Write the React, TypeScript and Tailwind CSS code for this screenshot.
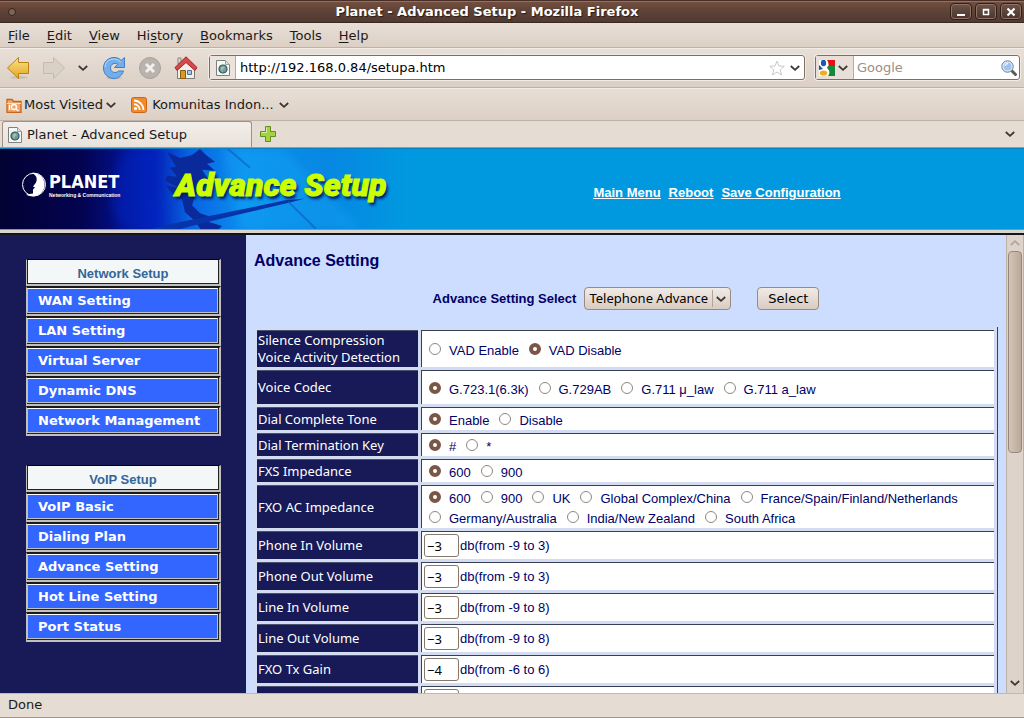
import type { ReactNode } from "react";

const menus = [
  { key: "F", rest: "ile" },
  { key: "E", rest: "dit" },
  { key: "V", rest: "iew" },
  { pre: "Hi", key: "s", rest: "tory" },
  { key: "B", rest: "ookmarks" },
  { key: "T", rest: "ools" },
  { key: "H", rest: "elp" },
];

const sidebar = [
  {
    title: "Network Setup",
    items: ["WAN Setting", "LAN Setting", "Virtual Server", "Dynamic DNS", "Network Management"],
  },
  {
    title: "VoIP Setup",
    items: ["VoIP Basic", "Dialing Plan", "Advance Setting", "Hot Line Setting", "Port Status"],
  },
];

const radioRows = [
  {
    name: "vad",
    label: "Silence Compression\nVoice Activity Detection",
    options: ["VAD Enable", "VAD Disable"],
    selected: 1,
    height: "h-[37px]",
  },
  {
    name: "codec",
    label: "Voice Codec",
    options: ["G.723.1(6.3k)", "G.729AB", "G.711 μ_law", "G.711 a_law"],
    selected: 0,
    height: "h-[34px]",
  },
  { name: "tone", label: "Dial Complete Tone", options: ["Enable", "Disable"], selected: 0, height: "h-[23px]" },
  { name: "key", label: "Dial Termination Key", options: ["#", "*"], selected: 0, height: "h-[23px]" },
  { name: "fxs", label: "FXS Impedance", options: ["600", "900"], selected: 0, height: "h-[23px]" },
  {
    name: "fxo",
    label: "FXO AC Impedance",
    options: [
      "600",
      "900",
      "UK",
      "Global Complex/China",
      "France/Spain/Finland/Netherlands",
      "Germany/Australia",
      "India/New Zealand",
      "South Africa",
    ],
    selected: 0,
    height: "h-[43px]",
  },
];

const volumeRows = [
  { id: "phone-in", label: "Phone In Volume", value: "−3", range: "db(from -9 to 3)" },
  { id: "phone-out", label: "Phone Out Volume", value: "−3", range: "db(from -9 to 3)" },
  { id: "line-in", label: "Line In Volume", value: "−3", range: "db(from -9 to 8)" },
  { id: "line-out", label: "Line Out Volume", value: "−3", range: "db(from -9 to 8)" },
  { id: "fxo-tx", label: "FXO Tx Gain", value: "−4", range: "db(from -6 to 6)" },
  { id: "next", label: "", value: "", range: "" },
];

function Chevron({ className = "text-[#3c3732]", up = false }: { className?: string; up?: boolean }) {
  return (
    <svg viewBox="0 0 10 6" className={`h-[6px] w-[10px] shrink-0 ${className}`} fill="none" stroke="currentColor" strokeWidth="1.8">
      <path d={up ? "M.8 5 5 1.2 9.2 5" : "M.8 1 5 4.8 9.2 1"} />
    </svg>
  );
}

function PageIcon() {
  return (
    <svg viewBox="0 0 16 16" className="size-4 shrink-0">
      <path d="M1.5.5h9l4 4v11h-13z" fill="#f7f8f6" stroke="#7d817b" />
      <path d="M10.5.5v4h4" fill="#dfe2dc" stroke="#9da19a" />
      <circle cx="8" cy="9" r="4" fill="#6f9d97" stroke="#34536f" strokeWidth="1.2" />
      <path d="M6 7.5c1-1.5 3-1.5 3.500 0S7 9 7.500 11 5 10 6 7.500z" fill="#a3c391" />
    </svg>
  );
}

function BackIcon() {
  return (
    <svg viewBox="0 0 24 24" className="size-6">
      <defs>
        <linearGradient id="gold" x1="0" y1="0" x2="0" y2="1">
          <stop offset="0" stopColor="#fbe28a" />
          <stop offset="1" stopColor="#e5a51e" />
        </linearGradient>
      </defs>
      <ellipse cx="13" cy="21.500" rx="9" ry="1.500" fill="#cbbfb2" />
      <path d="M1.500 12 12.500 1.500v5h10v11h-10v5z" fill="url(#gold)" stroke="#b98314" strokeLinejoin="round" />
    </svg>
  );
}

function ForwardIcon() {
  return (
    <svg viewBox="0 0 24 24" className="size-6">
      <path d="M22.500 12 11.500 1.500v5h-10v11h10v5z" fill="#d9d0c6" stroke="#c5bbb0" strokeLinejoin="round" />
    </svg>
  );
}

function ReloadIcon() {
  return (
    <svg viewBox="0 0 24 24" className="size-6">
      <ellipse cx="12" cy="22" rx="8" ry="1.500" fill="#cbbfb2" />
      <path
        d="M22.500 1.500v10h-10l3.300-3.300C12.500 6.300 8.500 8 8.500 12c0 4.500 5 6 8 3h5c-1.500 4.500-5 7.500-9.500 7.500C6 22.500 1.500 18 1.500 12S6 1.500 12 1.500c3 0 5.300 1 7.200 2.900z"
        fill="#74aeea"
        stroke="#3f7fc6"
        strokeLinejoin="round"
      />
      <path d="M3 11C3.500 3 13.500.5 18.800 6" fill="none" stroke="#b8d8f7" />
    </svg>
  );
}

function StopIcon() {
  return (
    <svg viewBox="0 0 24 24" className="size-6">
      <circle cx="12" cy="12" r="10.500" fill="#b9b3ae" stroke="#a8a29c" />
      <path d="m8 8 8 8M16 8l-8 8" stroke="#f2efec" strokeWidth="3" />
    </svg>
  );
}

function HomeIcon() {
  return (
    <svg viewBox="0 0 24 24" className="size-6">
      <path d="M3.500 12 12 4l8.500 8v10.500h-17z" fill="#f1efea" stroke="#7c7a75" />
      <path d="M4 2h3v6H4z" fill="#d9d5cf" stroke="#8b8782" />
      <path d="M12 .8 23 11.500 21 14.500 12 6.500l-9 8L1 11.500z" fill="#d8474c" stroke="#a32328" strokeLinejoin="round" />
      <path d="M6.500 14.500h5v8h-5z" fill="#d99a24" stroke="#8a5c10" />
      <path d="M13.500 14.500h4v4h-4z" fill="#a9c6e6" stroke="#54718f" />
    </svg>
  );
}

function FolderIcon() {
  return (
    <svg viewBox="0 0 16 16" className="size-4 shrink-0">
      <path d="M1 2.500h5l1.500 2H15v11H1z" fill="#f2a768" stroke="#c8641c" strokeWidth="1.300" />
      <path d="M1 6.500h14" stroke="#fbe0c8" />
      <circle cx="8" cy="10" r="2.500" fill="none" stroke="#fff" strokeWidth="1.300" />
      <path d="m10 12 2.500 2M3.500 8v5" stroke="#fff" strokeWidth="1.300" />
    </svg>
  );
}

function FeedIcon() {
  return (
    <svg viewBox="0 0 16 16" className="size-4 shrink-0">
      <rect x=".5" y=".5" width="15" height="15" rx="2" fill="#f08a2c" stroke="#cf6511" />
      <circle cx="4.500" cy="11.500" r="1.600" fill="#fff" />
      <path d="M3 7.200A6 6 0 0 1 8.800 13M3 3.500A9.500 9.500 0 0 1 12.500 13" fill="none" stroke="#fff" strokeWidth="1.800" />
    </svg>
  );
}

function GoogleIcon() {
  return (
    <svg viewBox="0 0 16 16" className="size-4 shrink-0">
      <path d="M0 0h16v16H0z" fill="#fff" />
      <path d="M8 0h8v6H9.500C10 4 9 1.500 8 0z" fill="#e80f14" />
      <path d="M9 6h7v10H9c2-3 2-5-1-8z" fill="#128a37" />
      <path d="M0 5c2 2 3 3 4 4L0 10z" fill="#1d4fa3" />
      <ellipse cx="4.500" cy="3" rx="2.600" ry="3.300" fill="#1a58b5" />
      <ellipse cx="4.500" cy="13" rx="3.800" ry="2.600" fill="#eab020" />
    </svg>
  );
}

function PlusIcon() {
  return (
    <svg viewBox="0 0 16 16" className="size-4">
      <path d="M5.500.5h5v5h5v5h-5v5h-5v-5h-5v-5h5z" fill="#a5d243" stroke="#5f8f1d" strokeLinejoin="round" />
      <path d="M6.500 6.500v-5M1.500 6.500h5" stroke="#d8f09a" />
    </svg>
  );
}

function WindowButton({ label, children }: { label: string; children: ReactNode }) {
  return (
    <button
      aria-label={label}
      className="flex h-[17px] w-[22px] items-center justify-center rounded-sm border border-[#2e1f19] bg-gradient-to-b from-[#6e5247] to-[#4a362d] shadow-[inset_0_0_0_1px_#8d7468]"
    >
      <svg viewBox="0 0 10 10" className="size-[10px]" fill="none" stroke="#fff">
        {children}
      </svg>
    </button>
  );
}

function TitleBar() {
  return (
    <header className="flex h-[23px] shrink-0 items-center border-y border-t-[#4b2f27] border-b-[#39281f] bg-gradient-to-b from-[#75503f] via-[#5d4236] to-[#513a30] pr-[2px] shadow-[inset_0_1px_0_#94705f]">
      <div className="flex w-6 justify-center">
        <span className="size-2 rounded-full border border-[#33231c] bg-[#7e6559]" />
      </div>
      <h1 className="flex-1 text-center text-[13px] leading-5 font-bold text-white [text-shadow:1px_1px_1px_#2a1b15]">
        Planet - Advanced Setup - Mozilla Firefox
      </h1>
      <div className="flex gap-[3px]">
        <WindowButton label="Minimize">
          <path d="M1 8h8" strokeWidth="2" />
        </WindowButton>
        <WindowButton label="Maximize">
          <path d="M2.500 2.500h5v5h-5zM2 3h6" strokeWidth="1.500" />
        </WindowButton>
        <WindowButton label="Close">
          <path d="m1.500 1.500 7 7M8.500 1.500l-7 7" strokeWidth="2.200" />
        </WindowButton>
      </div>
    </header>
  );
}

function Toolbar() {
  return (
    <div className="flex h-10 shrink-0 items-center border-b border-[#bfb1a5] bg-gradient-to-b from-[#e8dfd7] to-[#dcd0c5] pr-1 pl-[6px] shadow-[inset_0_1px_0_#f3ede8]">
      <button aria-label="Back"><BackIcon /></button>
      <button aria-label="Forward" className="ml-3"><ForwardIcon /></button>
      <button aria-label="Recent pages" className="ml-3"><Chevron /></button>
      <button aria-label="Reload" className="ml-[14px]"><ReloadIcon /></button>
      <button aria-label="Stop" className="ml-3"><StopIcon /></button>
      <button aria-label="Home" className="ml-3"><HomeIcon /></button>

      <div className="ml-[11px] flex h-[25px] flex-1 items-center rounded-[3px] border border-[#7f6f63] bg-white pr-1 shadow-[0_0_0_1px_#f2ebe5]">
        <div className="flex h-full w-[26px] items-center justify-center border-r border-[#b9aa9e] bg-[#ebe3dc]">
          <PageIcon />
        </div>
        <input aria-label="Address" defaultValue="http://192.168.0.84/setupa.htm" className="min-w-0 flex-1 pl-1 text-[13px] text-black outline-none" />
        <svg viewBox="0 0 16 16" className="size-4" fill="#fff" stroke="#c9c9c9">
          <path d="m8 1 2 5 5.200.3-4 3.400L12.600 15 8 12l-4.600 3 1.400-5.300-4-3.400L6 6z" strokeLinejoin="round" />
        </svg>
        <button aria-label="History" className="ml-[5px]"><Chevron /></button>
      </div>

      <div className="ml-[10px] flex h-[25px] w-[205px] items-center rounded-[3px] border border-[#7f6f63] bg-white pr-[2px] shadow-[0_0_0_1px_#f2ebe5]">
        <button aria-label="Search engine" className="flex h-full w-[38px] items-center gap-[3px] border-r border-[#b9aa9e] bg-[#e8dfd8] pl-[3px]">
          <GoogleIcon />
          <Chevron />
        </button>
        <input aria-label="Search" placeholder="Google" className="min-w-0 flex-1 pl-[3px] text-[13px] outline-none placeholder:text-[#9b8f84]" />
        <button aria-label="Go">
          <svg viewBox="0 0 16 16" className="size-4">
            <path d="m10 10 4.500 4.500" stroke="#5b5b58" strokeWidth="3" strokeLinecap="round" />
            <circle cx="6.500" cy="6.500" r="5" fill="#9fc3ec" stroke="#e9eef5" strokeWidth="2" />
            <circle cx="6.500" cy="6.500" r="5.700" fill="none" stroke="#5f7f9f" />
            <path d="M4 6a3 3 0 0 1 3-2.500" fill="none" stroke="#e6f1fc" strokeWidth="1.300" />
          </svg>
        </button>
      </div>
    </div>
  );
}

function Banner() {
  return (
    <div className="flex h-[81px] shrink-0 border-t border-[#0b7fc0] bg-[#0099e0]">
      <div className="relative w-[410px] shrink-0">
        <svg viewBox="0 0 410 81" preserveAspectRatio="none" className="size-full">
          <defs>
            <linearGradient id="sky" x1="0" y1="0" x2="1" y2="0">
              <stop offset="0" stopColor="#020233" />
              <stop offset=".2" stopColor="#030350" />
              <stop offset=".3" stopColor="#04118a" />
              <stop offset=".38" stopColor="#0423b8" />
              <stop offset=".46" stopColor="#0862e2" />
              <stop offset=".6" stopColor="#0b90ee" />
              <stop offset=".8" stopColor="#0787e2" />
              <stop offset="1" stopColor="#0099e0" />
            </linearGradient>
            <filter id="soft">
              <feGaussianBlur stdDeviation="5" />
            </filter>
          </defs>
          <path d="M0 0h410v81H0z" fill="url(#sky)" />
          <path d="M124 0h34c-8 30-4 50 8 81h-46C106 50 112 30 124 0z" fill="#0528c8" opacity=".5" filter="url(#soft)" />
          <path d="M222 0h60l80 81H240z" fill="#16a8f6" opacity=".35" filter="url(#soft)" />
          <path
            d="M167 3l13 6 12-3 8-6 6 6 9 7-8 2 8 7-13-1 6 9-8 2 2 9-7 6-3 10 8 8 12 4-3 5 13 4-4 4 9 5-2 4h-27l-3-5 6-4-6-9-10-9-3-13-10-6-6-8 12 2-13-7 2-5 10 1-7-9 6-1z"
            fill="#0a2a9c"
          />
          <path d="M150 81c50-12 95-20 135-29l20-2c-45 12-85 20-125 31z" fill="#0734a8" />
          <path d="M228 0 250 19M288 53l28 28" fill="none" stroke="#0b5cc0" strokeWidth="2" opacity=".6" />
          <circle cx="34" cy="36" r="11.500" fill="none" stroke="#fff" />
          <path d="M32 24c6 4 5 7 4 10l-3 4 2 1-2 2v4l-7 1a12 12 0 1 0 6-22z" fill="#fff" />
        </svg>
        <div className="absolute top-[23px] left-[49px] text-white">
          <div className="font-['DejaVu_Sans_Condensed','DejaVu_Sans',sans-serif] text-[18px] leading-5 font-bold">PLANET</div>
          <div className="font-['Liberation_Sans',sans-serif] text-[5px] leading-[6px] font-bold whitespace-nowrap">Networking &amp; Communication</div>
        </div>
        <div className="absolute top-4 left-[175px] font-['Roboto',sans-serif] text-[32px] leading-10 font-black whitespace-nowrap text-[#ccff00] italic [-webkit-text-stroke:1px_#ccff00] [text-shadow:2px_3px_3px_#021a66]">
          Advance Setup
        </div>
      </div>
      <nav className="flex flex-1 items-center justify-center gap-2 pt-2 font-['Liberation_Sans',sans-serif] text-[13px] font-bold text-white underline">
        <a href="#main">Main Menu</a>
        <a href="#reboot">Reboot</a>
        <a href="#save">Save Configuration</a>
      </nav>
    </div>
  );
}

function Sidebar() {
  return (
    <aside className="flex w-[246px] shrink-0 flex-col gap-[29px] bg-[#171a57] pt-6 pl-[26px]">
      {sidebar.map((group) => (
        <nav key={group.title} className="w-[195px]">
          <div className="border-t border-r-2 border-b-2 border-l border-t-black border-r-[#c0c0c0] border-b-[#c0c0c0] border-l-[#c0c0c0]">
            <h2 className="h-6 border-r border-b border-l border-[#222] bg-[#f4f7f7] pt-[2px] text-center font-['Liberation_Sans',sans-serif] text-[13px] leading-6 font-bold text-[#336699]">
              {group.title}
            </h2>
          </div>
          {group.items.map((item) => (
            <div key={item} className="border-t-2 border-r-2 border-b-2 border-l border-t-[#1a1a1a] border-r-[#c0c0c0] border-b-[#c0c0c0] border-l-[#c0c0c0]">
              <div className="border-r border-b border-[#222]">
                <a
                  href="#"
                  className="block h-[25px] border border-t-white border-r-[#c0c0c0] border-b-[#c0c0c0] border-l-[#c0c0c0] bg-[#3366ff] pl-[10px] text-[13px] leading-6 font-bold whitespace-nowrap text-white"
                >
                  {item}
                </a>
              </div>
            </div>
          ))}
        </nav>
      ))}
    </aside>
  );
}

const thClass =
  "w-[161px] border-t border-[#4a5270] bg-[#171a57] p-0 pl-px text-left align-middle font-['Noto_Sans',sans-serif] text-[13px] leading-[17px] font-normal whitespace-pre text-white";
const tdClass = "border-t border-l border-[#3a3f58] bg-white p-0 align-middle";

function SettingsTable() {
  return (
    <table className="mt-[17px] w-full border-separate border-spacing-[3px] border-r border-[#3a3f58] bg-[#d3dcf0]">
      <tbody>
        {radioRows.map((row) => (
          <tr key={row.name} className={row.height}>
            <th scope="row" className={thClass}>{row.label}</th>
            <td className={tdClass}>
              <div role="radiogroup" aria-label={row.label} className="flex flex-wrap gap-x-[10px] pl-[7px]">
                {row.options.map((option, i) => (
                  <label key={option} className="flex h-5 items-center gap-2">
                    <input
                      type="radio"
                      name={row.name}
                      defaultChecked={i === row.selected}
                      className="size-3 appearance-none rounded-full border border-[#8f877e] bg-white checked:border-4 checked:border-[#7a5646]"
                    />
                    <span className="pt-1 leading-4">{option}</span>
                  </label>
                ))}
              </div>
            </td>
          </tr>
        ))}
        {volumeRows.map((row) => (
          <tr key={row.id} className="h-7">
            <th scope="row" className={thClass}>
              <label htmlFor={row.id}>{row.label}</label>
            </th>
            <td className={tdClass}>
              <div className="flex items-center gap-px pl-[2px]">
                <input
                  id={row.id}
                  defaultValue={row.value}
                  className="h-[23px] w-[35px] rounded-[3px] border border-[#85786c] bg-white px-[2px] font-['Noto_Sans',sans-serif] text-[13px] text-black"
                />
                <span>{row.range}</span>
              </div>
            </td>
          </tr>
        ))}
      </tbody>
    </table>
  );
}

function ScrollBar() {
  return (
    <div className="flex w-[18px] shrink-0 flex-col items-center border-x border-[#bdb0a5] bg-[#ddd3ca]">
      <div className="flex h-4 items-center">
        <Chevron up className="text-[#b3a79c]" />
      </div>
      <div className="h-[202px] w-[14px] rounded-sm border border-[#98887b] bg-gradient-to-r from-[#d2c4b7] to-[#baa999]" />
      <div className="mt-auto flex h-5 items-center">
        <Chevron />
      </div>
    </div>
  );
}

export default function App() {
  return (
    <div className="flex h-screen flex-col overflow-hidden bg-[#e5dcd3] font-['DejaVu_Sans',sans-serif] text-[13px] text-[#1a1a1a]">
      <TitleBar />

      <nav className="flex h-[25px] shrink-0 items-center gap-[17px] border-b border-[#bfb1a5] bg-gradient-to-b from-[#e8dfd7] to-[#dcd0c5] pt-px pl-2">
        {menus.map((menu) => (
          <button key={menu.rest}>
            {menu.pre}
            <span className="underline underline-offset-2">{menu.key}</span>
            {menu.rest}
          </button>
        ))}
      </nav>

      <Toolbar />

      <div className="flex h-[33px] shrink-0 items-center border-b border-[#bfb1a5] bg-gradient-to-b from-[#e8dfd7] to-[#dcd0c5] pt-px pl-[6px] shadow-[inset_0_1px_0_#f3ede8]">
        <button className="flex items-center gap-[2px]">
          <FolderIcon />
          Most Visited
          <Chevron className="ml-px text-[#3c3732]" />
        </button>
        <button className="ml-[15px] flex items-center gap-[5px]">
          <FeedIcon />
          Komunitas Indon...
          <Chevron />
        </button>
      </div>

      <div className="flex h-[27px] shrink-0 items-end border-b border-[#a8988b] bg-[#e5dcd3] pr-[9px] pl-[2px]">
        <button className="flex h-[26px] w-[250px] items-center gap-1 rounded-t-[3px] border border-b-0 border-[#a09084] bg-gradient-to-b from-[#f3eeea] to-[#e9e2db] pl-1">
          <PageIcon />
          Planet - Advanced Setup
        </button>
        <button aria-label="New tab" className="mb-[5px] ml-2"><PlusIcon /></button>
        <button aria-label="List all tabs" className="mb-[10px] ml-auto"><Chevron /></button>
      </div>

      <Banner />
      <div className="h-[6px] shrink-0 border-t border-b-2 border-t-[#8b9299] border-b-[#141414] bg-[#d9d4cf]" />

      <div className="flex min-h-0 flex-1">
        <Sidebar />
        <main className="min-w-0 flex-1 overflow-hidden bg-[#ccddff] px-2 pt-4 font-['Liberation_Sans',sans-serif] text-[#000066]">
          <h2 className="text-base leading-5 font-bold">Advance Setting</h2>
          <form className="mt-4 flex items-center justify-center">
            <label htmlFor="section" className="font-bold">Advance Setting Select</label>
            <div className="relative ml-2">
              <select
                id="section"
                className="block h-[23px] w-[147px] appearance-none rounded-sm border border-[#998b80] bg-gradient-to-b from-[#f1ebe6] to-[#d9ccc1] pl-1 font-['Noto_Sans',sans-serif] text-[13px] text-black"
              >
                <option>Telephone Advance</option>
              </select>
              <span className="pointer-events-none absolute inset-y-[3px] right-[5px] flex items-center border-l border-[#b3a598] pl-[3px]">
                <Chevron />
              </span>
            </div>
            <button
              type="button"
              className="ml-[26px] h-[23px] w-[62px] rounded-sm border border-[#998b80] bg-gradient-to-b from-[#f1ebe6] to-[#d9ccc1] font-['DejaVu_Sans',sans-serif] text-black"
            >
              Select
            </button>
          </form>
          <SettingsTable />
        </main>
        <ScrollBar />
      </div>

      <footer className="h-[25px] shrink-0 border-y border-t-[#c4b8ad] border-b-[#a3968b] pl-2 leading-[22px]">Done</footer>
    </div>
  );
}
